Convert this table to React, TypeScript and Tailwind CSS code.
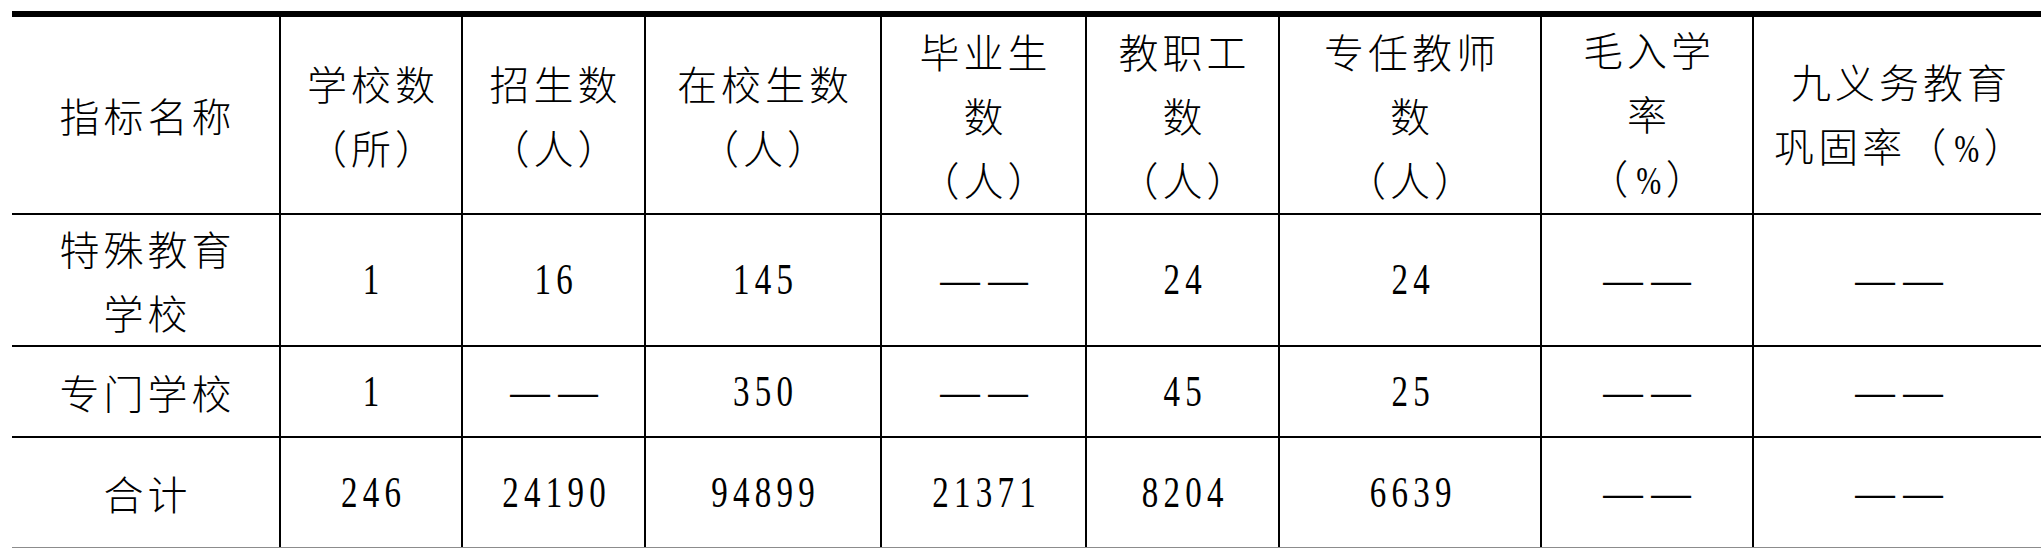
import React from "react";

const cjk = "font-['Noto_Sans_CJK_SC',sans-serif] font-light text-[40px] tracking-[4px] text-black";

function Lines({ lines }: { lines: React.ReactNode[] }) {
  return (
    <div className={`${cjk} leading-[64px] text-center`}>
      {lines.map((l, i) => (
        <div key={i} className="whitespace-nowrap pl-[4px]">
          {l}
        </div>
      ))}
    </div>
  );
}

function Num({ v }: { v: string }) {
  return (
    <span className="inline-block font-['Liberation_Serif',serif] text-[44px] leading-none tracking-[7px] pl-[7px] scale-x-[0.75] text-black">
      {v}
    </span>
  );
}

function Dash() {
  return (
    <span className="flex items-center gap-[4px] font-['Liberation_Serif',serif] text-[44px] leading-none text-black">
      <span className="inline-block scale-x-[0.9]">—</span>
      <span className="inline-block scale-x-[0.9]">—</span>
    </span>
  );
}

const Pct = () => (
  <span>
    （<span className="inline-block font-['Liberation_Serif',serif] text-[40px] tracking-normal scale-x-[0.75]">%</span>）
  </span>
);

type CellVal = { t: "num"; v: string } | { t: "dash" } | { t: "txt"; lines: React.ReactNode[] };

const header: React.ReactNode[][] = [
  ["指标名称"],
  ["学校数", "（所）"],
  ["招生数", "（人）"],
  ["在校生数", "（人）"],
  ["毕业生", "数", "（人）"],
  ["教职工", "数", "（人）"],
  ["专任教师", "数", "（人）"],
  ["毛入学", "率", <Pct key="p" />],
  ["九义务教育", <span key="g">巩固率<Pct /></span>],
];

const n = (v: string): CellVal => ({ t: "num", v });
const d: CellVal = { t: "dash" };

const rows: { h: string; cells: CellVal[]; last?: boolean }[] = [
  {
    h: "h-[132px]",
    cells: [{ t: "txt", lines: ["特殊教育", "学校"] }, n("1"), n("16"), n("145"), d, n("24"), n("24"), d, d],
  },
  {
    h: "h-[91px]",
    cells: [{ t: "txt", lines: ["专门学校"] }, n("1"), d, n("350"), d, n("45"), n("25"), d, d],
  },
  {
    h: "h-[109px]",
    last: true,
    cells: [{ t: "txt", lines: ["合计"] }, n("246"), n("24190"), n("94899"), n("21371"), n("8204"), n("6639"), d, d],
  },
];

export default function App() {
  return (
    <div className="w-[2041px] h-[548px] overflow-hidden bg-white pt-[11px] pl-[12px]">
      <div className="grid w-max grid-cols-[269px_182px_183px_236px_205px_193px_262px_212px_290px] border-t-[6px] border-t-black border-b border-b-[#8c8c8c]">
        {header.map((lines, i) => (
          <div
            key={`h${i}`}
            className={`h-[198px] flex items-center justify-center border-b-2 border-b-black ${
              i < 8 ? "border-r-2 border-r-black" : ""
            }`}
          >
            <Lines lines={lines} />
          </div>
        ))}
        {rows.map((r, ri) =>
          r.cells.map((c, ci) => (
            <div
              key={`r${ri}c${ci}`}
              className={`${r.h} flex items-center justify-center ${
                r.last ? "" : "border-b-2 border-b-black"
              } ${ci < 8 ? "border-r-2 border-r-black" : ""}`}
            >
              {c.t === "num" ? <Num v={c.v} /> : c.t === "dash" ? <Dash /> : <Lines lines={c.lines} />}
            </div>
          ))
        )}
      </div>
    </div>
  );
}
